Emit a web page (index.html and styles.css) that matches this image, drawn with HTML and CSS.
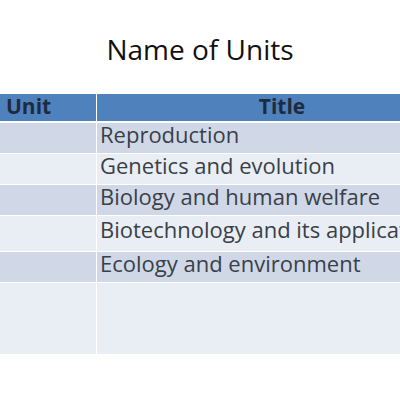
FILE: index.html
```html
<!DOCTYPE html>
<html>
<head>
<meta charset="utf-8">
<link rel="stylesheet" href="styles.css">
</head>
<body>
<div class="slide">
  <h1 class="title">Name of Units</h1>
  <table class="units">
    <thead>
      <tr><th class="c-unit">Unit</th><th class="c-title">Title</th></tr>
    </thead>
    <tbody>
      <tr class="dark r1"><td></td><td>Reproduction</td></tr>
      <tr class="light r2"><td></td><td>Genetics and evolution</td></tr>
      <tr class="dark r3"><td></td><td>Biology and human welfare</td></tr>
      <tr class="light r4"><td></td><td>Biotechnology and its applications</td></tr>
      <tr class="dark r5"><td></td><td>Ecology and environment</td></tr>
      <tr class="light r6"><td></td><td></td></tr>
    </tbody>
  </table>
</div>
</body>
</html>
```
FILE: styles.css
```css
html, body {
  margin: 0;
  padding: 0;
  background: #ffffff;
  width: 400px;
  height: 400px;
  overflow: hidden;
}
.slide {
  width: 400px;
  height: 400px;
  overflow: hidden;
  font-family: "Open Sans", "DejaVu Sans", sans-serif;
}
.title {
  margin: 0;
  padding-top: 32px;
  height: 94px;
  box-sizing: border-box;
  text-align: center;
  font-weight: 400;
  font-size: 28px;
  line-height: 34px;
  color: #111111;
}
.units {
  border-collapse: collapse;
  margin-left: -37px;
  table-layout: fixed;
  width: 505px;
}
.units th, .units td {
  border: 1px solid #ffffff;
  padding: 0 0 0 3px;
  text-align: left;
  vertical-align: top;
  font-size: 22px;
  color: #3a3f47;
  white-space: nowrap;
}
.units th {
  background: #4f81bd;
  color: #1f2b3d;
  font-weight: 700;
  height: 27px;
  line-height: 25px;
  font-size: 21px;
  border-top: 0;
  border-bottom-width: 2px;
}
.units th.c-unit {
  width: 133px;
  padding-left: 42px;
  box-sizing: border-box;
}
.units th.c-title {
  text-align: center;
  padding-left: 0;
}
.units td {
  line-height: 22px;
}
.dark td { background: #d0d8e8; }
.light td { background: #e9edf4; }
.r1 td { height: 30px; }
.r2 td { height: 30px; }
.r3 td { height: 30px; }
.r4 td { height: 33px; padding-top: 2px; }
.r5 td { height: 30px; }
.r6 td { height: 71px; }
```
